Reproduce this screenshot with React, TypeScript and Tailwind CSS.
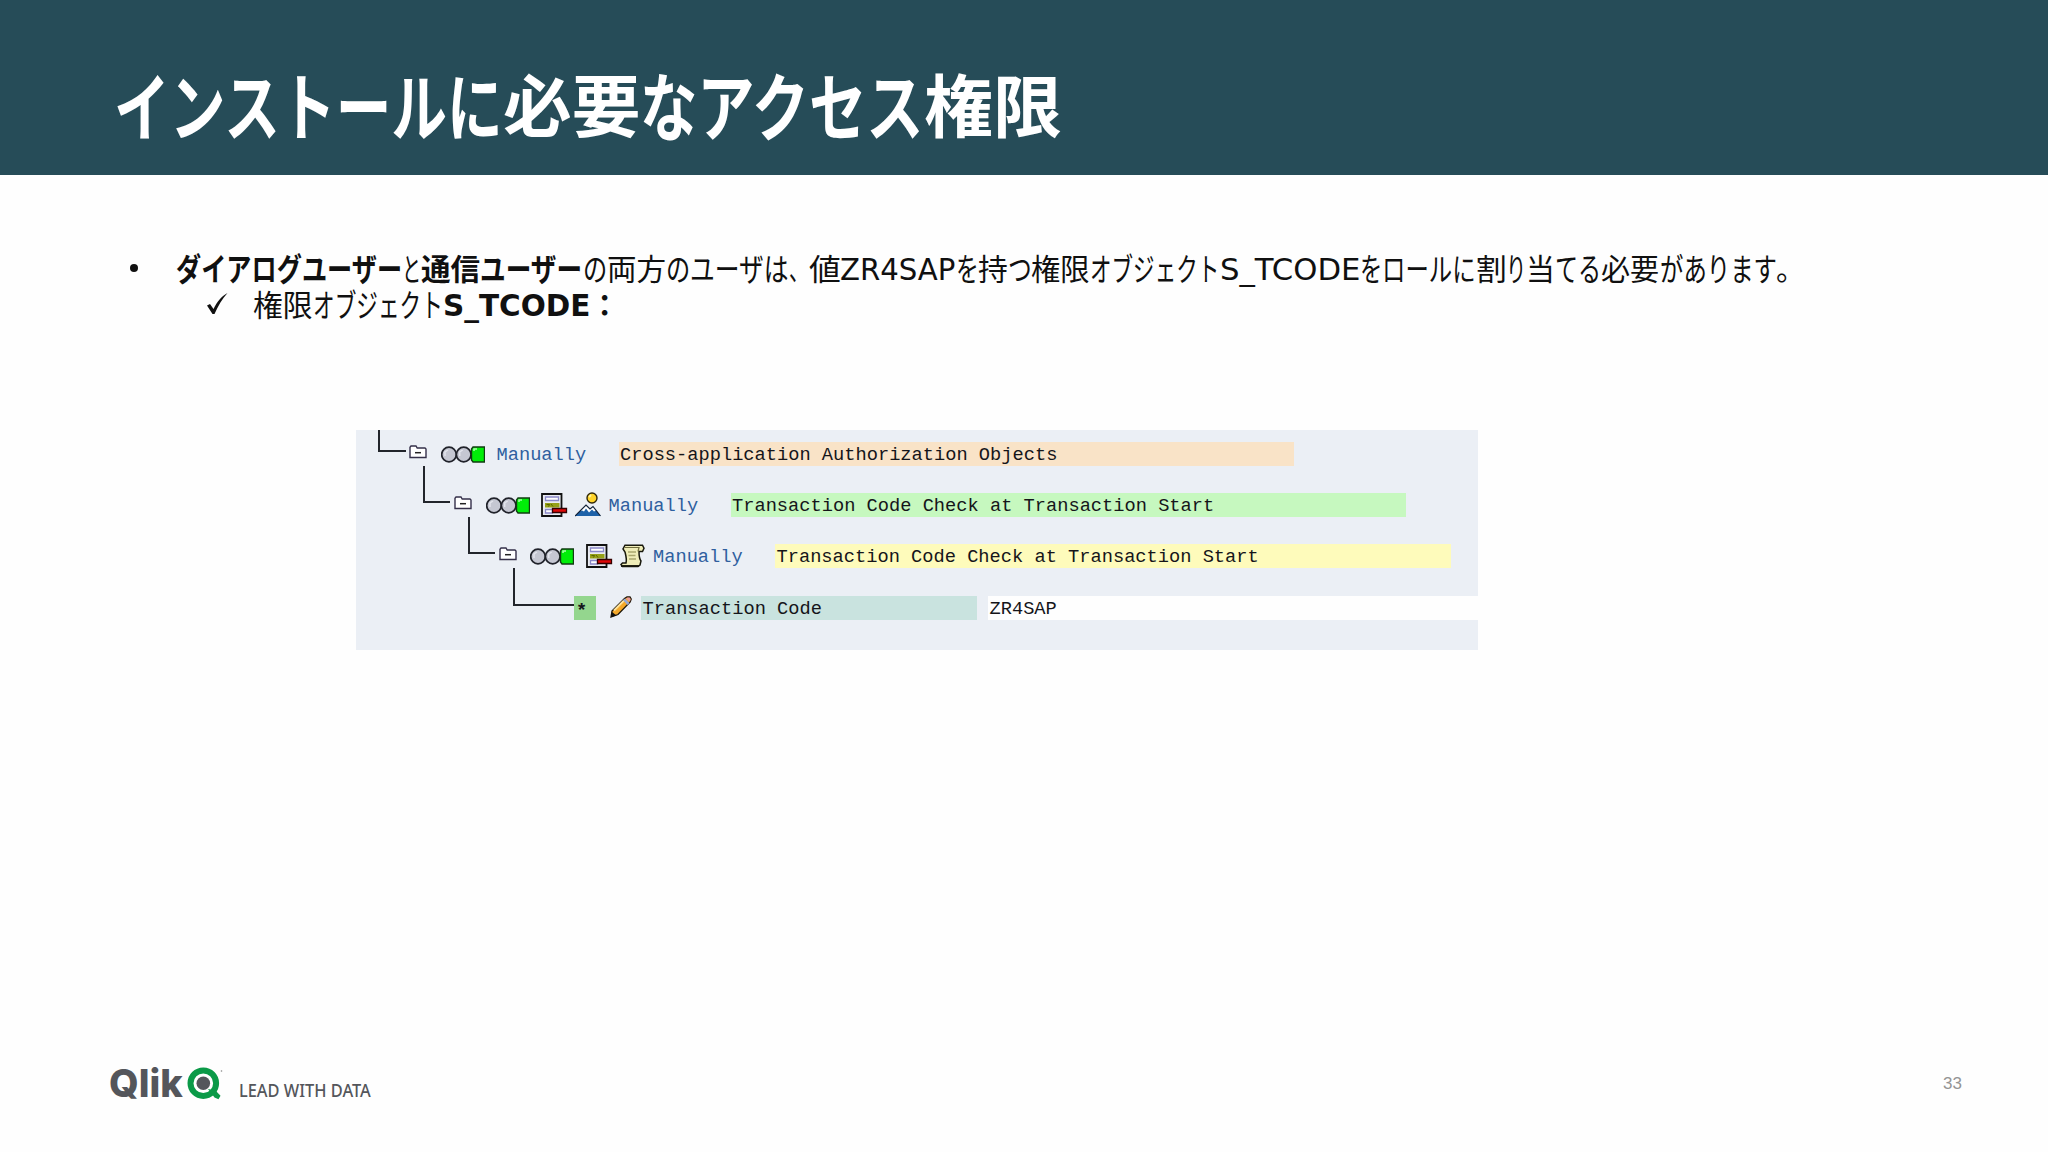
import { useLayoutEffect, useRef, type ReactNode } from "react";

type Run = { t: string; w: number; b?: boolean; latin?: boolean; kana?: boolean };

const TITLE: Run[] = [
  { t: "インストールに", w: 389, b: true, kana: true },
  { t: "必要", w: 137.5, b: true },
  { t: "なアクセス", w: 284, b: true, kana: true },
  { t: "権限", w: 138, b: true },
];

const LINE_ONE: Run[] = [
  { t: "ダイアログユーザー", w: 226, b: true, kana: true },
  { t: "と", w: 19, kana: true },
  { t: "通信", w: 59.5, b: true },
  { t: "ユーザー", w: 102.5, b: true, kana: true },
  { t: "の", w: 24, kana: true },
  { t: "両方", w: 59.5 },
  { t: "の", w: 24, kana: true },
  { t: "ユーザは", w: 99, kana: true },
  { t: "、", w: 19.5 },
  { t: "値", w: 31.5 },
  { t: "ZR4SAP", w: 115.5, latin: true },
  { t: "を", w: 22.5, kana: true },
  { t: "持", w: 29.5 },
  { t: "つ", w: 23.5, kana: true },
  { t: "権限", w: 59 },
  { t: "オブジェクト", w: 129.5, kana: true },
  { t: "S_TCODE", w: 140.5, latin: true },
  { t: "を", w: 22, kana: true },
  { t: "ロールに", w: 93.5, kana: true },
  { t: "割", w: 30.5 },
  { t: "り", w: 20, kana: true },
  { t: "当", w: 28.5 },
  { t: "てる", w: 46.5, kana: true },
  { t: "必要", w: 58.5 },
  { t: "があります", w: 116.5, kana: true },
  { t: "。", w: 29 },
];

const LINE_TWO: Run[] = [
  { t: "権限", w: 60 },
  { t: "オブジェクト", w: 130, kana: true },
  { t: "S_TCODE", w: 147, b: true, latin: true },
  { t: "：", w: 29, b: true },
];

function Fit({ width, tall = 1, className = "", children }: { width: number; tall?: number; className?: string; children: ReactNode }) {
  const ref = useRef<HTMLSpanElement>(null);

  useLayoutEffect(() => {
    const el = ref.current;
    if (!el) return;
    el.style.transform = `scale(${width / el.offsetWidth}, ${tall})`;
  }, [width, tall]);

  return (
    <span className="block shrink-0 whitespace-nowrap" style={{ width }}>
      <span ref={ref} className={`inline-block origin-left ${className}`}>
        {children}
      </span>
    </span>
  );
}

function Runs({ runs }: { runs: Run[] }) {
  return (
    <>
      {runs.map((r, i) => (
        <Fit
          key={i}
          width={r.w}
          tall={r.kana ? 1.09 : 1}
          className={`${r.b ? "font-bold" : ""} ${r.latin ? "font-['DejaVu_Sans',sans-serif]" : ""}`}
        >
          {r.t}
        </Fit>
      ))}
    </>
  );
}

const Folder = () => (
  <svg className="mb-[7px] h-[14px] w-[18px] shrink-0" viewBox="0 0 18 14">
    <path d="M1 12.5V2.2L2 1h5l1.2 2H16l1 1v8.500z" fill="#fff" stroke="#35304a" strokeWidth="1.400" />
    <path d="M6 7.700h6" stroke="#222" strokeWidth="1.500" />
  </svg>
);

const Lights = () => (
  <svg className="mb-[3px] h-[17px] w-[44px] shrink-0" viewBox="0 0 44 17">
    <circle cx="8" cy="8.500" r="7.300" fill="#c5c7d2" stroke="#20222a" strokeWidth="1.700" />
    <circle cx="22.700" cy="8.500" r="7.300" fill="#c5c7d2" stroke="#20222a" strokeWidth="1.700" />
    <path d="M4 10V6l3-2M18.700 10V6l3-2" fill="none" stroke="#e2e4ec" strokeWidth="1.500" />
    <path d="M32 1h11.500v15H32l-1.500-2V3z" fill="#00ee08" stroke="#123c12" strokeWidth="1.400" />
    <path d="M33 5V3h3" fill="none" stroke="#a8ffa8" strokeWidth="1.500" />
  </svg>
);

const Doc = () => (
  <svg className="h-[24px] w-[27px] shrink-0" viewBox="0 0 27 24">
    <path d="M1 1h19.500v22H1z" fill="#e9ebf0" stroke="#111" strokeWidth="1.800" />
    <path d="M4.500 4h13v3.500h-13z" fill="#fff" stroke="#8a88c8" strokeWidth="1.300" />
    <path d="M4 10h14.500v4.500H4z" fill="#95a018" />
    <path d="M5.500 11.500h3l-1 2M10 11l2 2.500" fill="none" stroke="#596400" />
    <path d="M4.500 16.500h7v3.500h-7z" fill="#fff" stroke="#8a88c8" strokeWidth="1.300" />
    <path d="M11.500 15.500h14v4h-14z" fill="#e00808" stroke="#300" strokeWidth="1.300" />
  </svg>
);

const Mountain = () => (
  <svg className="h-[25px] w-[26px] shrink-0" viewBox="0 0 26 25">
    <circle cx="17" cy="6" r="5" fill="#ffd42a" stroke="#30280a" strokeWidth="1.400" />
    <path d="M14 5l2-2" stroke="#fff5a0" strokeWidth="2" />
    <path d="M0 24L11 13l4 4 3-2.500L25.500 24z" fill="#1d61a8" />
    <path d="M5 19l6-6 4 4 3-2.500 3 4-2 1-2-2-3 3-3-4-2 3-2-1z" fill="#fff" />
    <path d="M0 24L11 13l4 4 3-2.500L25.500 24" fill="none" stroke="#132238" strokeWidth="1.200" />
  </svg>
);

const Scroll = () => (
  <svg className="h-[24px] w-[26px] shrink-0" viewBox="0 0 26 24">
    <path d="M5 1.200h17.500l1.500 3-1.500 3.300H19c0 4 0 7 2 9.500l-1 4-2 1.500H2.500L1 20.500l1.500-1.500H6c1-4 0-7-1-11L3 5z" fill="#efedb8" stroke="#18180c" strokeWidth="1.500" />
    <path d="M5 3.500h14l-1 4M2 21.500h16" fill="none" stroke="#6f6c3c" strokeWidth="1.200" />
    <path d="M8 8h8M8.500 11.500h7M9 15h7" stroke="#a9a66c" strokeWidth="1.300" />
    <path d="M1 22h18" stroke="#18180c" strokeWidth="1.800" />
  </svg>
);

const Pencil = () => (
  <svg className="mb-[2px] ml-[14px] h-[22px] w-[22px] shrink-0" viewBox="0 0 22 22">
    <path d="M2 15L14.500 2.500 17 1h3l1.200 2-1 3L8 18.500 1 21z" fill="#f4a82a" stroke="#1c1408" strokeWidth="1.300" />
    <path d="M4 14.500L14 4.500" stroke="#ffe39a" strokeWidth="2" />
    <path d="M13 4l2-1.500 4.500 4.500-2 2z" fill="#93a8d8" />
    <path d="M16 2.200l1.500-.8h2l1.200 1.600-.7 2.800z" fill="#ee9a9a" />
    <path d="M1 21l1-5 4.500 3.500z" fill="#111" />
  </svg>
);

const Manually = ({ className }: { className: string }) => (
  <span className={`h-6 w-[122px] shrink-0 text-[#2f5f9f] ${className}`}>Manually</span>
);

function Tree() {
  return (
    <div className="ml-[356px] flex h-[219.500px] w-[1122px] flex-col overflow-hidden bg-[#ebeff5] font-['Courier_New','Liberation_Mono',monospace] text-[18.7px] leading-[27px] whitespace-pre text-[#15151a]">
      <div className="flex h-[35.500px] items-end">
        <div className="mb-[14px] ml-[22px] w-[28px] self-stretch border-b-2 border-l-2 border-[#22252b]" />
        <div className="ml-[3px] flex"><Folder /></div>
        <div className="ml-[13.500px] flex"><Lights /></div>
        <Manually className="ml-3" />
        <span className="h-6 w-[675.500px] bg-[#f9e3c7] pl-[1.500px]">Cross-application Authorization Objects</span>
      </div>
      <div className="flex h-[51.400px] items-end">
        <div className="mb-[14px] ml-[67px] w-[27px] self-stretch border-b-2 border-l-2 border-[#22252b]" />
        <div className="ml-[3.500px] flex"><Folder /></div>
        <div className="ml-[14px] flex"><Lights /></div>
        <div className="ml-[11.500px] flex items-end gap-[7px]"><Doc /><Mountain /></div>
        <Manually className="ml-[7.500px]" />
        <span className="h-6 w-[675.500px] bg-[#c6f8bf] pl-[1.500px]">Transaction Code Check at Transaction Start</span>
      </div>
      <div className="flex h-[51.400px] items-end">
        <div className="mb-[14px] ml-[112px] w-[27px] self-stretch border-b-2 border-l-2 border-[#22252b]" />
        <div className="ml-[3.500px] flex"><Folder /></div>
        <div className="ml-[13.500px] flex"><Lights /></div>
        <div className="ml-[12px] flex items-end gap-[7px]"><Doc /><Scroll /></div>
        <Manually className="ml-[7px]" />
        <span className="h-6 w-[675.500px] bg-[#fefbbb] pl-[1.500px]">Transaction Code Check at Transaction Start</span>
      </div>
      <div className="flex h-[51.400px] items-end">
        <div className="mb-[14px] ml-[157px] w-[61px] self-stretch border-b-2 border-l-2 border-[#22252b]" />
        <span className="h-6 w-[22px] bg-[#94d68e] pl-[2px] leading-[31px] font-bold">*</span>
        <Pencil />
        <span className="ml-[9px] h-6 w-[336px] bg-[#c9e3df] pl-[1.500px]">Transaction Code</span>
        <span className="ml-[10.500px] h-6 flex-1 bg-[#fefefe] pl-[2px]">ZR4SAP</span>
      </div>
    </div>
  );
}

function Footer() {
  return (
    <footer className="mt-auto flex h-[102px] items-start justify-between pr-[86px] pl-[109px] text-[#54565b]">
      <div className="flex items-start">
        <Fit width={74} className="font-['Inter',sans-serif] text-[38px] leading-[66px] font-extrabold">Qlik</Fit>
        <svg className="mt-[15px] ml-[3px] h-[36px] w-[38px]" viewBox="0 0 38 36">
          <circle cx="17.300" cy="18.200" r="12.800" fill="#fff" stroke="#0b9a48" strokeWidth="6" />
          <path d="M22 24l6.500 8.500 4 1.800 2-3.500-5-5.300z" fill="#0b9a48" />
          <circle cx="17.300" cy="18.200" r="6.800" fill="#54565b" />
          <circle cx="35.500" cy="6" r=".8" fill="#888" />
        </svg>
        <div className="ml-[15px] flex">
          <Fit width={132} className="mt-[28px] font-['Noto_Sans',sans-serif] text-[17.5px] leading-6 font-medium">LEAD WITH DATA</Fit>
        </div>
      </div>
      <span className="mt-[22px] font-['Liberation_Sans',sans-serif] text-[17px] leading-6 text-[#949494]">33</span>
    </footer>
  );
}

export default function App() {
  return (
    <div className="flex h-[1152px] w-[2048px] flex-col overflow-hidden bg-[#fefefe] font-['Noto_Sans_CJK_JP',sans-serif]">
      <header className="h-[175px] shrink-0 bg-[#264c58] pl-[113.500px]">
        <h1 className="flex pt-[54px] text-[68px] leading-[98px] text-white">
          <Runs runs={TITLE} />
        </h1>
      </header>
      <main className="mt-[75px] text-[29.3px] leading-[36px] text-[#101010]">
        <div className="flex h-[36px] items-center">
          <span className="ml-[129.500px] size-2 rounded-full bg-[#101010]" />
          <p className="ml-[38px] flex">
            <Runs runs={LINE_ONE} />
          </p>
        </div>
        <div className="flex h-[36px] items-center">
          <svg className="ml-[207px] h-[22px] w-[21px]" viewBox="0 0 21 22">
            <path d="M0 12.500l3-1.500 3.500 5C10 9 14 3.500 20.500 0 15 6 11 13 7.500 21H5.500z" fill="#101010" />
          </svg>
          <p className="ml-[25px] flex">
            <Runs runs={LINE_TWO} />
          </p>
        </div>
      </main>
      <div className="mt-[108px]">
        <Tree />
      </div>
      <Footer />
    </div>
  );
}
